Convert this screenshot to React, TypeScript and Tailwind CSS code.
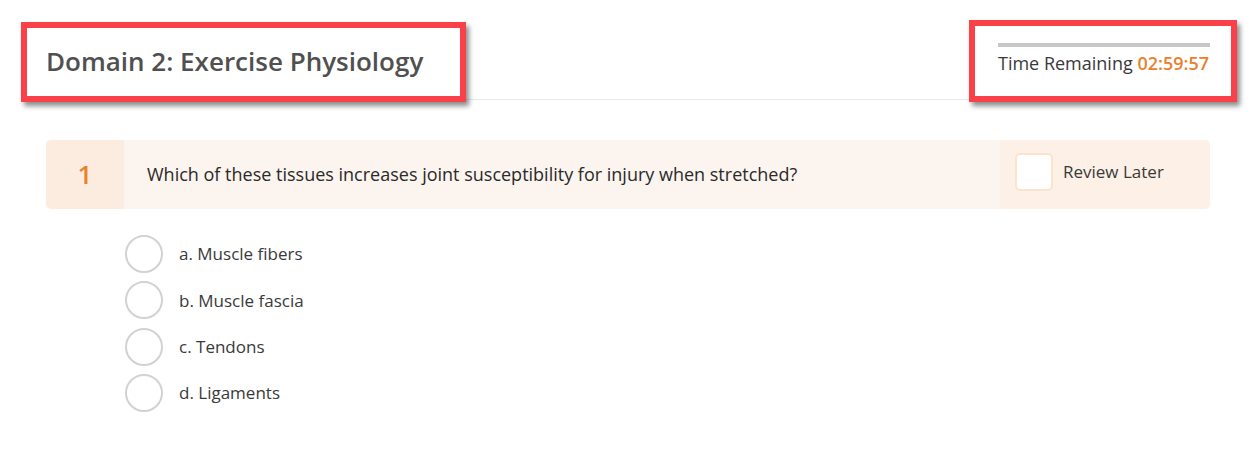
import { useState } from 'react';

const options = ['a. Muscle fibers', 'b. Muscle fascia', 'c. Tendons', 'd. Ligaments'];

function Highlight({ className }: { className: string }) {
  return (
    <div
      className={`pointer-events-none absolute border-[6px] border-[#fa4048] shadow-[3px_4px_5px_rgba(0,0,0,0.45)] ${className}`}
    />
  );
}

export default function App() {
  const [selected, setSelected] = useState<number | null>(null);
  const [review, setReview] = useState(false);

  return (
    <div className="relative min-h-[471px] bg-white font-['Open_Sans','Liberation_Sans',sans-serif]">
      <div className="pl-[46px] pr-[49px]">
        <div className="flex h-[100px] items-start justify-between border-b border-[#e9e9e9]">
          <h1 className="mt-[44px] text-[26px] font-semibold leading-[34px] text-[#505050]">
            Domain 2: Exercise Physiology
          </h1>
          <div className="mt-[43px] flex w-[212px] flex-col">
            <div className="h-[4px] bg-[#c8c8c8]" />
            <div className="mt-[3px] whitespace-nowrap text-[18px] leading-[26px] text-[#3a3a3a]">
              Time Remaining <span className="font-semibold text-[#ea7f2c]">02:59:57</span>
            </div>
          </div>
        </div>

        <div className="mt-[40px] flex h-[69px] overflow-hidden rounded-[5px] bg-[#fcf4ee]">
          <div className="flex w-[78px] items-center justify-center bg-[#fbecdf] text-[26px] font-semibold text-[#ea822c]">
            1
          </div>
          <div className="flex flex-1 items-center pl-[23px] text-[18px] text-[#2a2a2a]">
            Which of these tissues increases joint susceptibility for injury when stretched?
          </div>
          <div className="flex w-[210px] items-center bg-[#fcf0e7] pb-[5px] pl-[15px]">
            <button
              onClick={() => setReview(!review)}
              className="flex h-[38px] w-[38px] items-center justify-center rounded-[5px] border-2 border-[#fbe3cc] bg-white text-[#ea822c]"
            >
              {review ? '✓' : ''}
            </button>
            <span className="ml-[10px] text-[17px] text-[#3a3a3a]">Review Later</span>
          </div>
        </div>

        <div className="mt-[26px] flex flex-col gap-[8.3px] pl-[79px]">
          {options.map((opt, i) => (
            <button
              key={opt}
              onClick={() => setSelected(i)}
              className="flex items-center text-left"
            >
              <span className="flex h-[38px] w-[38px] items-center justify-center rounded-full border-2 border-[#d2d2d2] bg-white">
                {selected === i && <span className="h-[18px] w-[18px] rounded-full bg-[#ea822c]" />}
              </span>
              <span className="ml-[16px] text-[17px] text-[#3a3a3a]">{opt}</span>
            </button>
          ))}
        </div>
      </div>

      <Highlight className="left-[21px] top-[22px] h-[80px] w-[445px]" />
      <Highlight className="left-[969px] top-[20px] h-[82px] w-[268px]" />
    </div>
  );
}
